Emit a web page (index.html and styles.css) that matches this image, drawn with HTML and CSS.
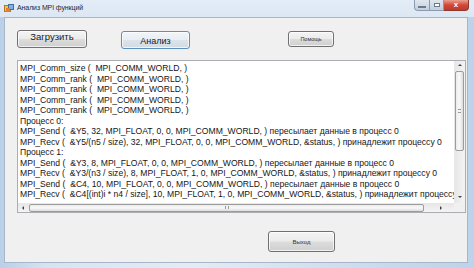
FILE: index.html
```html
<!DOCTYPE html>
<html>
<head>
<meta charset="utf-8">
<link rel="stylesheet" href="styles.css">
</head>
<body>
<div class="window">
  <div class="titlebar">
    <svg class="appicon" width="10" height="9" viewBox="0 0 10 9">
      <rect x="0.5" y="1.5" width="6" height="6" fill="#f4c542" stroke="#b07a18"/>
      <rect x="4.5" y="0.5" width="5" height="5" fill="#7fb2e0" stroke="#3f6f9f"/>
      <rect x="2" y="4" width="4" height="4" fill="#e57a3b"/>
    </svg>
    <span class="title">Анализ MPI функций</span>
    <div class="caption-btns">
      <div class="cbtn cmin"><span class="glyph-min"></span></div>
      <div class="cbtn cmax"><span class="glyph-max"></span></div>
      <div class="cbtn cclose"><span class="glyph-x">x</span></div>
    </div>
  </div>
  <div class="client">
    <div class="toolbar">
      <button class="btn btn-load">Загрузить</button>
      <button class="btn btn-analyze">Анализ</button>
      <button class="btn btn-help">Помощь</button>
    </div>
    <div class="textbox">
      <div class="text">MPI_Comm_size (  MPI_COMM_WORLD, )
MPI_Comm_rank (  MPI_COMM_WORLD, )
MPI_Comm_rank (  MPI_COMM_WORLD, )
MPI_Comm_rank (  MPI_COMM_WORLD, )
MPI_Comm_rank (  MPI_COMM_WORLD, )
Процесс 0:
MPI_Send (  &amp;Y5, 32, MPI_FLOAT, 0, 0, MPI_COMM_WORLD, ) пересылает данные в процесс 0
MPI_Recv (  &amp;Y5/(n5 / size), 32, MPI_FLOAT, 0, 0, MPI_COMM_WORLD, &amp;status, ) принадлежит процессу 0
Процесс 1:
MPI_Send (  &amp;Y3, 8, MPI_FLOAT, 0, 0, MPI_COMM_WORLD, ) пересылает данные в процесс 0
MPI_Recv (  &amp;Y3/(n3 / size), 8, MPI_FLOAT, 1, 0, MPI_COMM_WORLD, &amp;status, ) принадлежит процессу 0
MPI_Send (  &amp;C4, 10, MPI_FLOAT, 0, 0, MPI_COMM_WORLD, ) пересылает данные в процесс 0
MPI_Recv (  &amp;C4[(int)i * n4 / size], 10, MPI_FLOAT, 1, 0, MPI_COMM_WORLD, &amp;status, ) принадлежит процессу 0</div>
      <div class="vscroll">
        <span class="arrow-up"></span>
        <div class="vthumb"><span class="vgrip"></span></div>
        <span class="arrow-down"></span>
      </div>
      <div class="hscroll">
        <span class="arrow-left"></span>
        <div class="hthumb"><span class="hgrip"></span></div>
        <span class="arrow-right"></span>
      </div>
      <div class="corner"></div>
    </div>
    <div class="footer">
      <button class="btn btn-exit">Выход</button>
    </div>
  </div>
</div>
</body>
</html>
```
FILE: styles.css
```css
* { box-sizing: border-box; }
html, body { margin: 0; padding: 0; }
body {
  width: 474px;
  height: 268px;
  overflow: hidden;
  font-family: "Liberation Sans", Arial, sans-serif;
}
.window {
  width: 474px;
  height: 268px;
  display: flex;
  flex-direction: column;
  background: linear-gradient(90deg, #b9d0e8 0%, #d6e4f2 10%, #e3ecf6 40%, #cfdff0 70%, #bcd3ea 100%);
}
.titlebar {
  height: 17px;
  display: flex;
  align-items: flex-start;
  padding-left: 4px;
  background: linear-gradient(180deg, #e4edf7 0%, #dce7f3 100%);
}
.appicon { margin-top: 4px; }
.title {
  margin-left: 3px;
  margin-top: 4px;
  font-size: 7px;
  color: #2a2a2a;
  letter-spacing: -0.1px;
}
.caption-btns {
  margin-left: auto;
  margin-right: 5px;
  display: flex;
}
.cbtn {
  height: 11px;
  border: 1px solid #8a9bb0;
  border-top: none;
  display: flex;
  align-items: center;
  justify-content: center;
}
.cmin {
  width: 16px;
  border-radius: 0 0 0 4px;
  background: linear-gradient(180deg, #dfe7f0, #c3cfdd);
}
.cmax {
  width: 14px;
  border-left: none;
  background: linear-gradient(180deg, #dfe7f0, #c3cfdd);
}
.cclose {
  width: 25px;
  border-left: none;
  border-color: #8d3a2e;
  border-radius: 0 0 4px 0;
  background: linear-gradient(180deg, #e9a190 0%, #d1483a 50%, #c2392a 100%);
}
.glyph-min { width: 6px; border: 1px solid #6a7a8c; box-sizing: content-box; height: 0; margin-top: 3px; background: #fff; }
.glyph-max { width: 6px; height: 4px; border: 1px solid #6a7a8c; background: #fff; }
.glyph-x { color: #fff; font-size: 8px; font-weight: bold; line-height: 8px; font-family: "Liberation Sans", sans-serif; }

.client {
  margin: 0 6px 5px 4px;
  flex: 1;
  background: #f0f0f0;
  border: 1px solid #a7b7c9;
  display: flex;
  flex-direction: column;
  padding: 12px 0 0 12px;
}
.toolbar {
  display: flex;
  align-items: flex-start;
  height: 30px;
}
.btn {
  font-family: "Liberation Sans", Arial, sans-serif;
  color: #1a1a1a;
  border: 1px solid #707070;
  border-radius: 3px;
  background: linear-gradient(180deg, #f4f4f4 0%, #ebebeb 48%, #dcdcdc 52%, #cfcfcf 100%);
  padding: 0;
  margin: 0;
  box-shadow: inset 0 0 0 1px rgba(255,255,255,0.7);
}
.btn-load {
  width: 70px;
  height: 18px;
  font-size: 9.5px;
  line-height: 12px;
  padding-bottom: 4px;
}
.btn-analyze {
  width: 69px;
  height: 18px;
  margin-left: 34px;
  margin-top: 1px;
  font-size: 9px;
  border-color: #5b8fbe;
  background: linear-gradient(180deg, #f2f5f8 0%, #e9eef3 48%, #dde3ea 52%, #d3dae2 100%);
  padding-top: 2px;
}
.btn-help {
  width: 46px;
  height: 16px;
  margin-left: 98px;
  margin-top: 1px;
  font-size: 5.5px;
  color: #333;
}
.textbox {
  width: 449px;
  height: 153px;
  background: #fff;
  border: 1px solid #abadb3;
  display: grid;
  grid-template-columns: 1fr 11px;
  grid-template-rows: 1fr 9px;
  overflow: hidden;
}
.text {
  grid-column: 1;
  grid-row: 1;
  white-space: pre;
  overflow: hidden;
  font-size: 8.6px;
  line-height: 10.5px;
  color: #161616;
  padding: 2px 0 0 2px;
}
.vscroll {
  grid-column: 2;
  grid-row: 1;
  background: linear-gradient(90deg, #e6e6e6, #f4f4f4);
  display: flex;
  flex-direction: column;
  align-items: center;
  padding: 3px 0 2px;
}
.arrow-up, .arrow-down, .arrow-left, .arrow-right {
  width: 0; height: 0;
  border: 2px solid transparent;
}
.arrow-up { border-bottom: 2px solid #444; border-top: none; margin-bottom: 5px; }
.arrow-down { border-top: 2px solid #444; border-bottom: none; margin-top: auto; margin-bottom: 3px; }
.vthumb {
  width: 9px;
  height: 80px;
  border: 1px solid #9c9c9c;
  border-radius: 2px;
  background: linear-gradient(90deg, #ececec, #f8f8f8 50%, #dcdcdc);
  display: flex;
  align-items: center;
  justify-content: center;
}
.vgrip { width: 3px; height: 4px; border-top: 1px solid #999; border-bottom: 1px solid #999; }
.hscroll {
  grid-column: 1;
  grid-row: 2;
  background: linear-gradient(180deg, #e6e6e6, #f4f4f4);
  display: flex;
  align-items: center;
  padding: 0 12px 0 4px;
}
.arrow-left { border-right: 2px solid #444; border-left: none; margin-right: 5px; }
.arrow-right { border-left: 2px solid #444; border-right: none; margin-left: auto; }
.hthumb {
  width: 395px;
  height: 8px;
  border: 1px solid #9c9c9c;
  border-radius: 2px;
  background: linear-gradient(180deg, #ececec, #f8f8f8 50%, #dcdcdc);
  display: flex;
  align-items: center;
  justify-content: center;
}
.hgrip { width: 4px; height: 3px; border-left: 1px solid #999; border-right: 1px solid #999; }
.corner { grid-column: 2; grid-row: 2; background: #f0f0f0; }
.footer {
  display: flex;
  padding-top: 18px;
  padding-left: 251px;
}
.btn-exit {
  width: 67px;
  height: 21px;
  font-size: 6px;
  color: #333;
}
```
